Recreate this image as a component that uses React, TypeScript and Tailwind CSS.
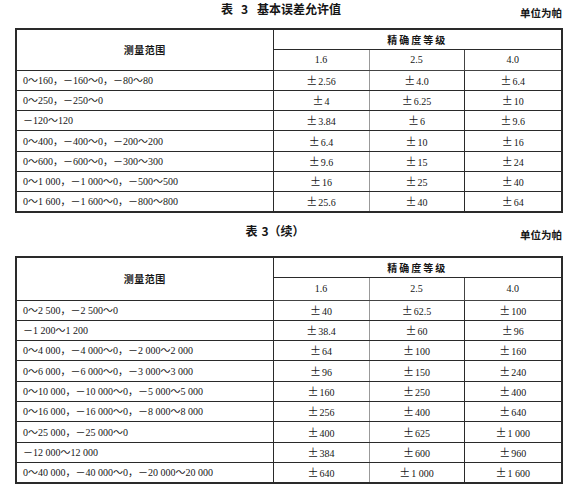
import React from 'react';

const serif = "font-['Liberation_Serif','Noto_Sans_CJK_SC',serif]";
const hei = "font-['Noto_Sans_CJK_SC',sans-serif]";

type Row = [string, string, string, string];

const table1: Row[] = [
  ['0～160，－160～0，－80～80', '2.56', '4.0', '6.4'],
  ['0～250，－250～0', '4', '6.25', '10'],
  ['－120～120', '3.84', '6', '9.6'],
  ['0～400，－400～0，－200～200', '6.4', '10', '16'],
  ['0～600，－600～0，－300～300', '9.6', '15', '24'],
  ['0～1 000，－1 000～0，－500～500', '16', '25', '40'],
  ['0～1 600，－1 600～0，－800～800', '25.6', '40', '64'],
];

const table2: Row[] = [
  ['0～2 500，－2 500～0', '40', '62.5', '100'],
  ['－1 200～1 200', '38.4', '60', '96'],
  ['0～4 000，－4 000～0，－2 000～2 000', '64', '100', '160'],
  ['0～6 000，－6 000～0，－3 000～3 000', '96', '150', '240'],
  ['0～10 000，－10 000～0，－5 000～5 000', '160', '250', '400'],
  ['0～16 000，－16 000～0，－8 000～8 000', '256', '400', '640'],
  ['0～25 000，－25 000～0', '400', '625', '1 000'],
  ['－12 000～12 000', '384', '600', '960'],
  ['0～40 000，－40 000～0，－20 000～20 000', '640', '1 000', '1 600'],
];

function Caption({ children, shift = '' }: { children: React.ReactNode; shift?: string }) {
  return (
    <div className="grid grid-cols-[1fr_auto_1fr] h-[14px] pr-[8px]">
      <div />
      <div className={`${hei} ${shift} text-[12px] font-bold leading-[14px] whitespace-nowrap`}>{children}</div>
      <div className={`${hei} justify-self-end self-end text-[10.5px] font-bold leading-[12px] translate-y-[3px]`}>
        单位为帕
      </div>
    </div>
  );
}

function Value({ v }: { v: string }) {
  return (
    <span className={`${serif} whitespace-pre`}>
      <span className={`${hei} text-[11px] mr-[1px]`}>±</span>
      {v}
    </span>
  );
}

function DataTable({ rows, subH }: { rows: Row[]; subH: string }) {
  return (
    <table className="ml-[15px] w-[546px] table-fixed border-collapse border-2 border-[#2a2a2a] text-[10px] text-[#161616]">
      <colgroup>
        <col className="w-[257px]" />
        <col className="w-[96px]" />
        <col className="w-[95px]" />
        <col className="w-[98px]" />
      </colgroup>
      <thead>
        <tr className="h-[20px]">
          <th rowSpan={2} className={`${hei} border border-[#2a2a2a] font-bold text-[10px] tracking-[0.5px]`}>
            测量范围
          </th>
          <th colSpan={3} className={`${hei} border border-[#2a2a2a] font-bold text-[10px] tracking-[2px]`}>
            精确度等级
          </th>
        </tr>
        <tr className={subH}>
          <th className={`${serif} border border-[#444] border-r-[#999] font-normal`}>1.6</th>
          <th className={`${serif} border border-[#444] border-l-[#999] font-normal`}>2.5</th>
          <th className={`${serif} border border-[#444] font-normal`}>4.0</th>
        </tr>
      </thead>
      <tbody>
        {rows.map((r, i) => (
          <tr key={i} className="h-[20.3px]">
            <td className={`${serif} border border-[#2a2a2a] pl-[6px] whitespace-pre`}>{r[0]}</td>
            <td className="border border-[#2a2a2a] border-r-[#999] text-center">
              <Value v={r[1]} />
            </td>
            <td className="border border-[#2a2a2a] border-l-[#999] text-center">
              <Value v={r[2]} />
            </td>
            <td className="border border-[#2a2a2a] text-center">
              <Value v={r[3]} />
            </td>
          </tr>
        ))}
      </tbody>
    </table>
  );
}

export default function App() {
  return (
    <div className="w-[570px] h-[487px] bg-white text-[#151515] overflow-hidden pt-[2px]">
      <Caption>
        表<span className="ml-[8px]">3</span>
        <span className="ml-[9px]">基本误差允许值</span>
      </Caption>
      <div className="mt-[12px]">
        <DataTable rows={table1} subH="h-[21px]" />
      </div>
      <div className="mt-[11px]">
        <Caption shift="-translate-x-[6px]">
          表<span className="ml-[4px]">3</span>（续）
        </Caption>
      </div>
      <div className="mt-[18px]">
        <DataTable rows={table2} subH="h-[23px]" />
      </div>
    </div>
  );
}
